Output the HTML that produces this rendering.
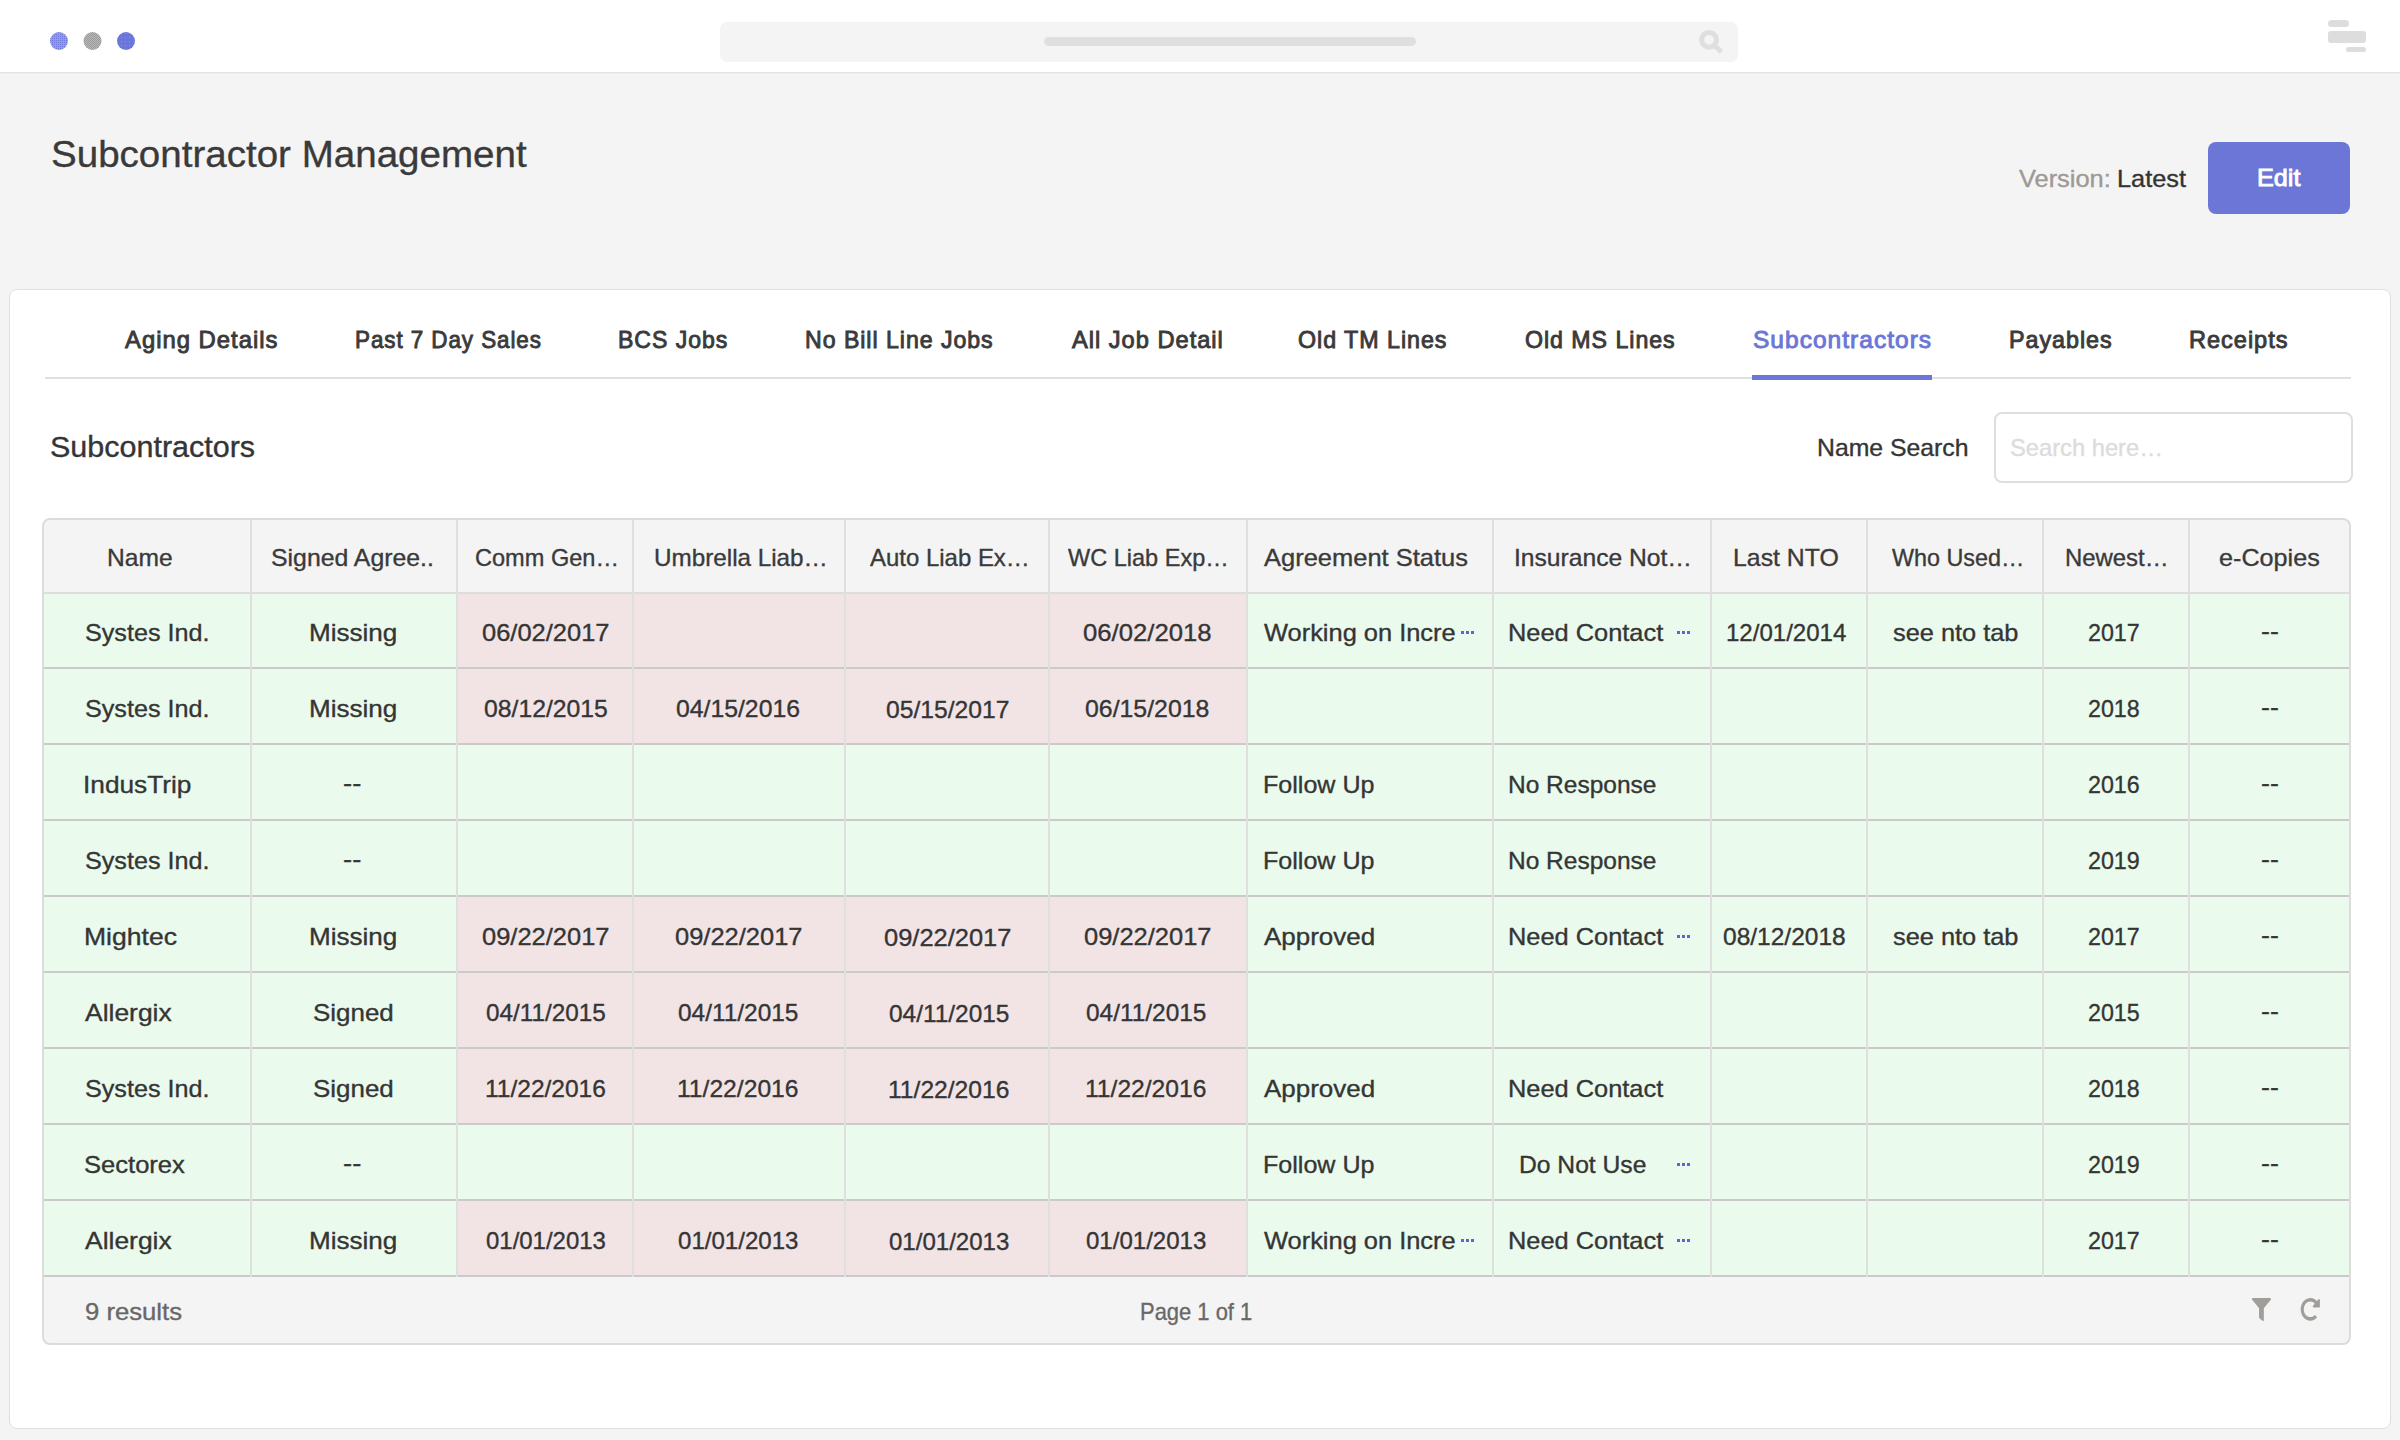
<!DOCTYPE html>
<html><head><meta charset="utf-8"><style>
html,body{margin:0;padding:0}
body{width:2400px;height:1440px;overflow:hidden;background:#f4f4f4;position:relative;font-family:"Liberation Sans",sans-serif}
.bx{position:absolute}
.t{position:absolute;white-space:pre;transform-origin:0 0;font-family:"Liberation Sans",sans-serif}
.dt{position:absolute;width:3px;height:3px;background:#5c65d8}
</style></head><body>
<div class=bx style="left:0;top:0;width:2400px;height:72px;background:#fff"></div>
<div class=bx style="left:0;top:72px;width:2400px;height:1px;background:#e2e4e4"></div>
<div class=bx style="left:0;top:73px;width:2400px;height:1px;background:#eceeee"></div>
<svg class=bx style="left:40px;top:22px" width="110" height="40" viewBox="40 22 110 40">
<defs>
<pattern id="p1" x="0" y="0" width="2" height="2" patternUnits="userSpaceOnUse"><rect width="2" height="2" fill="#a6a198"/><rect width="1" height="1" fill="#6e77d8"/></pattern>
<pattern id="p2" x="0" y="0" width="2" height="2" patternUnits="userSpaceOnUse"><rect width="2" height="2" fill="#b8b8b8"/><rect width="1" height="1" fill="#9a9a9a"/><rect x="1" y="1" width="1" height="1" fill="#9a9a9a"/></pattern>
<pattern id="p3" x="0" y="0" width="4" height="4" patternUnits="userSpaceOnUse"><rect width="4" height="4" fill="#6b76da"/><rect x="1" y="1" width="1" height="1" fill="#a29a86"/></pattern>
</defs>
<circle cx="59" cy="41" r="9" fill="url(#p1)"/>
<circle cx="92.5" cy="41" r="9" fill="url(#p2)"/>
<circle cx="126" cy="41" r="9" fill="url(#p3)"/>
</svg>


<div class=bx style="left:720px;top:22px;width:1018px;height:40px;border-radius:7px;background:#f4f4f4"></div>
<div class=bx style="left:1044px;top:37px;width:372px;height:9px;border-radius:5px;background:#dfdfdf"></div>
<svg class=bx style="left:1690px;top:24px" width="40" height="36" viewBox="1690 24 40 36">
 <circle cx="1709" cy="39.8" r="7.4" fill="none" stroke="#dfdfdf" stroke-width="5"/>
 <line x1="1714.5" y1="45.5" x2="1721.5" y2="52" stroke="#dfdfdf" stroke-width="5"/>
</svg>
<div class=bx style="left:2328px;top:20px;width:21px;height:7px;border-radius:3.5px;background:#dddddd"></div>
<div class=bx style="left:2328px;top:31px;width:38px;height:12px;border-radius:3px;background:#dddddd"></div>
<div class=bx style="left:2346px;top:47px;width:20px;height:5px;border-radius:2.5px;background:#dddddd"></div>
<div class=bx style="left:2208px;top:142px;width:142px;height:72px;border-radius:8px;background:#6b76d6"></div>
<div class=bx style="left:9px;top:289px;width:2380px;height:1138px;border:1px solid #dfdfdf;border-radius:8px;background:#fff"></div>
<div class=bx style="left:45px;top:377px;width:2306px;height:2px;background:#e0e0e0"></div>
<div class=bx style="left:1752px;top:375px;width:180px;height:5px;background:#6b76d6"></div>
<div class=bx style="left:1994px;top:412px;width:355px;height:67px;border:2px solid #dedede;border-radius:8px;background:#fff"></div>
<div class=bx style="left:42px;top:518px;width:2305px;height:823px;border:2px solid #dcdcdc;border-radius:8px;background:#f4f4f4"></div>
<div class=bx style="left:44px;top:594px;width:206px;height:73px;background:#eafbed"></div><div class=bx style="left:252px;top:594px;width:204px;height:73px;background:#eafbed"></div><div class=bx style="left:458px;top:594px;width:174px;height:73px;background:#f2e4e5"></div><div class=bx style="left:634px;top:594px;width:210px;height:73px;background:#f2e4e5"></div><div class=bx style="left:846px;top:594px;width:202px;height:73px;background:#f2e4e5"></div><div class=bx style="left:1050px;top:594px;width:196px;height:73px;background:#f2e4e5"></div><div class=bx style="left:1248px;top:594px;width:244px;height:73px;background:#eafbed"></div><div class=bx style="left:1494px;top:594px;width:216px;height:73px;background:#eafbed"></div><div class=bx style="left:1712px;top:594px;width:154px;height:73px;background:#eafbed"></div><div class=bx style="left:1868px;top:594px;width:174px;height:73px;background:#eafbed"></div><div class=bx style="left:2044px;top:594px;width:144px;height:73px;background:#eafbed"></div><div class=bx style="left:2190px;top:594px;width:159px;height:73px;background:#eafbed"></div><div class=bx style="left:44px;top:669px;width:206px;height:74px;background:#eafbed"></div><div class=bx style="left:252px;top:669px;width:204px;height:74px;background:#eafbed"></div><div class=bx style="left:458px;top:669px;width:174px;height:74px;background:#f2e4e5"></div><div class=bx style="left:634px;top:669px;width:210px;height:74px;background:#f2e4e5"></div><div class=bx style="left:846px;top:669px;width:202px;height:74px;background:#f2e4e5"></div><div class=bx style="left:1050px;top:669px;width:196px;height:74px;background:#f2e4e5"></div><div class=bx style="left:1248px;top:669px;width:244px;height:74px;background:#eafbed"></div><div class=bx style="left:1494px;top:669px;width:216px;height:74px;background:#eafbed"></div><div class=bx style="left:1712px;top:669px;width:154px;height:74px;background:#eafbed"></div><div class=bx style="left:1868px;top:669px;width:174px;height:74px;background:#eafbed"></div><div class=bx style="left:2044px;top:669px;width:144px;height:74px;background:#eafbed"></div><div class=bx style="left:2190px;top:669px;width:159px;height:74px;background:#eafbed"></div><div class=bx style="left:44px;top:745px;width:206px;height:74px;background:#eafbed"></div><div class=bx style="left:252px;top:745px;width:204px;height:74px;background:#eafbed"></div><div class=bx style="left:458px;top:745px;width:174px;height:74px;background:#eafbed"></div><div class=bx style="left:634px;top:745px;width:210px;height:74px;background:#eafbed"></div><div class=bx style="left:846px;top:745px;width:202px;height:74px;background:#eafbed"></div><div class=bx style="left:1050px;top:745px;width:196px;height:74px;background:#eafbed"></div><div class=bx style="left:1248px;top:745px;width:244px;height:74px;background:#eafbed"></div><div class=bx style="left:1494px;top:745px;width:216px;height:74px;background:#eafbed"></div><div class=bx style="left:1712px;top:745px;width:154px;height:74px;background:#eafbed"></div><div class=bx style="left:1868px;top:745px;width:174px;height:74px;background:#eafbed"></div><div class=bx style="left:2044px;top:745px;width:144px;height:74px;background:#eafbed"></div><div class=bx style="left:2190px;top:745px;width:159px;height:74px;background:#eafbed"></div><div class=bx style="left:44px;top:821px;width:206px;height:74px;background:#eafbed"></div><div class=bx style="left:252px;top:821px;width:204px;height:74px;background:#eafbed"></div><div class=bx style="left:458px;top:821px;width:174px;height:74px;background:#eafbed"></div><div class=bx style="left:634px;top:821px;width:210px;height:74px;background:#eafbed"></div><div class=bx style="left:846px;top:821px;width:202px;height:74px;background:#eafbed"></div><div class=bx style="left:1050px;top:821px;width:196px;height:74px;background:#eafbed"></div><div class=bx style="left:1248px;top:821px;width:244px;height:74px;background:#eafbed"></div><div class=bx style="left:1494px;top:821px;width:216px;height:74px;background:#eafbed"></div><div class=bx style="left:1712px;top:821px;width:154px;height:74px;background:#eafbed"></div><div class=bx style="left:1868px;top:821px;width:174px;height:74px;background:#eafbed"></div><div class=bx style="left:2044px;top:821px;width:144px;height:74px;background:#eafbed"></div><div class=bx style="left:2190px;top:821px;width:159px;height:74px;background:#eafbed"></div><div class=bx style="left:44px;top:897px;width:206px;height:74px;background:#eafbed"></div><div class=bx style="left:252px;top:897px;width:204px;height:74px;background:#eafbed"></div><div class=bx style="left:458px;top:897px;width:174px;height:74px;background:#f2e4e5"></div><div class=bx style="left:634px;top:897px;width:210px;height:74px;background:#f2e4e5"></div><div class=bx style="left:846px;top:897px;width:202px;height:74px;background:#f2e4e5"></div><div class=bx style="left:1050px;top:897px;width:196px;height:74px;background:#f2e4e5"></div><div class=bx style="left:1248px;top:897px;width:244px;height:74px;background:#eafbed"></div><div class=bx style="left:1494px;top:897px;width:216px;height:74px;background:#eafbed"></div><div class=bx style="left:1712px;top:897px;width:154px;height:74px;background:#eafbed"></div><div class=bx style="left:1868px;top:897px;width:174px;height:74px;background:#eafbed"></div><div class=bx style="left:2044px;top:897px;width:144px;height:74px;background:#eafbed"></div><div class=bx style="left:2190px;top:897px;width:159px;height:74px;background:#eafbed"></div><div class=bx style="left:44px;top:973px;width:206px;height:74px;background:#eafbed"></div><div class=bx style="left:252px;top:973px;width:204px;height:74px;background:#eafbed"></div><div class=bx style="left:458px;top:973px;width:174px;height:74px;background:#f2e4e5"></div><div class=bx style="left:634px;top:973px;width:210px;height:74px;background:#f2e4e5"></div><div class=bx style="left:846px;top:973px;width:202px;height:74px;background:#f2e4e5"></div><div class=bx style="left:1050px;top:973px;width:196px;height:74px;background:#f2e4e5"></div><div class=bx style="left:1248px;top:973px;width:244px;height:74px;background:#eafbed"></div><div class=bx style="left:1494px;top:973px;width:216px;height:74px;background:#eafbed"></div><div class=bx style="left:1712px;top:973px;width:154px;height:74px;background:#eafbed"></div><div class=bx style="left:1868px;top:973px;width:174px;height:74px;background:#eafbed"></div><div class=bx style="left:2044px;top:973px;width:144px;height:74px;background:#eafbed"></div><div class=bx style="left:2190px;top:973px;width:159px;height:74px;background:#eafbed"></div><div class=bx style="left:44px;top:1049px;width:206px;height:74px;background:#eafbed"></div><div class=bx style="left:252px;top:1049px;width:204px;height:74px;background:#eafbed"></div><div class=bx style="left:458px;top:1049px;width:174px;height:74px;background:#f2e4e5"></div><div class=bx style="left:634px;top:1049px;width:210px;height:74px;background:#f2e4e5"></div><div class=bx style="left:846px;top:1049px;width:202px;height:74px;background:#f2e4e5"></div><div class=bx style="left:1050px;top:1049px;width:196px;height:74px;background:#f2e4e5"></div><div class=bx style="left:1248px;top:1049px;width:244px;height:74px;background:#eafbed"></div><div class=bx style="left:1494px;top:1049px;width:216px;height:74px;background:#eafbed"></div><div class=bx style="left:1712px;top:1049px;width:154px;height:74px;background:#eafbed"></div><div class=bx style="left:1868px;top:1049px;width:174px;height:74px;background:#eafbed"></div><div class=bx style="left:2044px;top:1049px;width:144px;height:74px;background:#eafbed"></div><div class=bx style="left:2190px;top:1049px;width:159px;height:74px;background:#eafbed"></div><div class=bx style="left:44px;top:1125px;width:206px;height:74px;background:#eafbed"></div><div class=bx style="left:252px;top:1125px;width:204px;height:74px;background:#eafbed"></div><div class=bx style="left:458px;top:1125px;width:174px;height:74px;background:#eafbed"></div><div class=bx style="left:634px;top:1125px;width:210px;height:74px;background:#eafbed"></div><div class=bx style="left:846px;top:1125px;width:202px;height:74px;background:#eafbed"></div><div class=bx style="left:1050px;top:1125px;width:196px;height:74px;background:#eafbed"></div><div class=bx style="left:1248px;top:1125px;width:244px;height:74px;background:#eafbed"></div><div class=bx style="left:1494px;top:1125px;width:216px;height:74px;background:#eafbed"></div><div class=bx style="left:1712px;top:1125px;width:154px;height:74px;background:#eafbed"></div><div class=bx style="left:1868px;top:1125px;width:174px;height:74px;background:#eafbed"></div><div class=bx style="left:2044px;top:1125px;width:144px;height:74px;background:#eafbed"></div><div class=bx style="left:2190px;top:1125px;width:159px;height:74px;background:#eafbed"></div><div class=bx style="left:44px;top:1201px;width:206px;height:74px;background:#eafbed"></div><div class=bx style="left:252px;top:1201px;width:204px;height:74px;background:#eafbed"></div><div class=bx style="left:458px;top:1201px;width:174px;height:74px;background:#f2e4e5"></div><div class=bx style="left:634px;top:1201px;width:210px;height:74px;background:#f2e4e5"></div><div class=bx style="left:846px;top:1201px;width:202px;height:74px;background:#f2e4e5"></div><div class=bx style="left:1050px;top:1201px;width:196px;height:74px;background:#f2e4e5"></div><div class=bx style="left:1248px;top:1201px;width:244px;height:74px;background:#eafbed"></div><div class=bx style="left:1494px;top:1201px;width:216px;height:74px;background:#eafbed"></div><div class=bx style="left:1712px;top:1201px;width:154px;height:74px;background:#eafbed"></div><div class=bx style="left:1868px;top:1201px;width:174px;height:74px;background:#eafbed"></div><div class=bx style="left:2044px;top:1201px;width:144px;height:74px;background:#eafbed"></div><div class=bx style="left:2190px;top:1201px;width:159px;height:74px;background:#eafbed"></div>
<div class=bx style="left:44px;top:592px;width:2305px;height:2px;background:#dcdddc"></div><div class=bx style="left:44px;top:667px;width:2305px;height:2px;background:#cacaca"></div><div class=bx style="left:44px;top:743px;width:2305px;height:2px;background:#cacaca"></div><div class=bx style="left:44px;top:819px;width:2305px;height:2px;background:#cacaca"></div><div class=bx style="left:44px;top:895px;width:2305px;height:2px;background:#cacaca"></div><div class=bx style="left:44px;top:971px;width:2305px;height:2px;background:#cacaca"></div><div class=bx style="left:44px;top:1047px;width:2305px;height:2px;background:#cacaca"></div><div class=bx style="left:44px;top:1123px;width:2305px;height:2px;background:#cacaca"></div><div class=bx style="left:44px;top:1199px;width:2305px;height:2px;background:#cacaca"></div><div class=bx style="left:44px;top:1275px;width:2305px;height:2px;background:#cacaca"></div><div class=bx style="left:250px;top:520px;width:2px;height:757px;background:#dedfde"></div><div class=bx style="left:456px;top:520px;width:2px;height:757px;background:#dedfde"></div><div class=bx style="left:632px;top:520px;width:2px;height:757px;background:#dedfde"></div><div class=bx style="left:844px;top:520px;width:2px;height:757px;background:#dedfde"></div><div class=bx style="left:1048px;top:520px;width:2px;height:757px;background:#dedfde"></div><div class=bx style="left:1246px;top:520px;width:2px;height:757px;background:#dedfde"></div><div class=bx style="left:1492px;top:520px;width:2px;height:757px;background:#dedfde"></div><div class=bx style="left:1710px;top:520px;width:2px;height:757px;background:#dedfde"></div><div class=bx style="left:1866px;top:520px;width:2px;height:757px;background:#dedfde"></div><div class=bx style="left:2042px;top:520px;width:2px;height:757px;background:#dedfde"></div><div class=bx style="left:2188px;top:520px;width:2px;height:757px;background:#dedfde"></div>
<svg class=bx style="left:0;top:0" width="2400" height="1440" viewBox="0 0 2400 1440">
 <path transform="translate(2251.9 1298) scale(0.03730 0.04492)" d="M487.976 0H24.028C2.71 0-8.047 25.866 7.058 40.971L192 225.941V432c0 7.831 3.821 15.17 10.237 19.662l80 55.98C298.02 518.69 320 507.493 320 487.98V225.941l184.947-184.97C520.021 25.896 509.338 0 487.976 0z" fill="#a19d99"/>
 <path transform="translate(2300.390 1297.531) scale(0.03871 0.04617)" d="M256.455 8c66.269.119 126.437 26.233 170.859 68.685l35.715-35.715C478.149 25.851 504 36.559 504 57.941V192c0 13.255-10.745 24-24 24H345.941c-21.382 0-32.09-25.851-16.971-40.971l41.75-41.75c-30.864-28.899-70.801-44.907-113.23-45.273-92.398-.798-170.283 73.977-169.484 169.442C88.764 348.009 162.184 424 256 424c41.127 0 79.997-14.678 110.629-41.556 4.743-4.161 11.906-3.908 16.368.553l39.662 39.662c4.872 4.872 4.631 12.815-.482 17.433C378.202 479.813 319.926 504 256 504 119.034 504 8.001 392.967 8 256.002 7.999 119.193 119.646 7.755 256.455 8z" fill="#a19d99"/>
</svg>
<i class=dt style="left:1461px;top:631px"></i><i class=dt style="left:1466px;top:631px"></i><i class=dt style="left:1471px;top:631px"></i><i class=dt style="left:1677px;top:631px"></i><i class=dt style="left:1682px;top:631px"></i><i class=dt style="left:1687px;top:631px"></i><i class=dt style="left:1677px;top:935px"></i><i class=dt style="left:1682px;top:935px"></i><i class=dt style="left:1687px;top:935px"></i><i class=dt style="left:1677px;top:1163px"></i><i class=dt style="left:1682px;top:1163px"></i><i class=dt style="left:1687px;top:1163px"></i><i class=dt style="left:1461px;top:1239px"></i><i class=dt style="left:1466px;top:1239px"></i><i class=dt style="left:1471px;top:1239px"></i><i class=dt style="left:1677px;top:1239px"></i><i class=dt style="left:1682px;top:1239px"></i><i class=dt style="left:1687px;top:1239px"></i>
<span class=t style="left:50.67px;top:136.26px;font-size:37.5px;line-height:37.5px;font-weight:400;color:#3a3a3a;transform:scaleX(1.0278);letter-spacing:0px;-webkit-text-stroke:0.35px #3a3a3a">Subcontractor Management</span><span class=t style="left:2018.70px;top:167.38px;font-size:24px;line-height:24px;font-weight:400;color:#9d9994;transform:scaleX(1.0582);letter-spacing:0px;-webkit-text-stroke:0.35px #9d9994">Version:</span><span class=t style="left:2116.64px;top:167.38px;font-size:24px;line-height:24px;font-weight:400;color:#333333;transform:scaleX(1.0555);letter-spacing:0px;-webkit-text-stroke:0.35px #333333">Latest</span><span class=t style="left:2256.95px;top:165.88px;font-size:24px;line-height:24px;font-weight:400;color:#ffffff;transform:scaleX(1.0495);letter-spacing:0px;-webkit-text-stroke:0.9px #ffffff">Edit</span><span class=t style="left:124.90px;top:327.68px;font-size:24px;line-height:24px;font-weight:400;color:#3a3a3a;transform:scaleX(0.9934);letter-spacing:1.0px;-webkit-text-stroke:0.9px #3a3a3a">Aging Details</span><span class=t style="left:354.97px;top:327.68px;font-size:24px;line-height:24px;font-weight:400;color:#3a3a3a;transform:scaleX(0.9339);letter-spacing:1.0px;-webkit-text-stroke:0.9px #3a3a3a">Past 7 Day Sales</span><span class=t style="left:618.34px;top:327.68px;font-size:24px;line-height:24px;font-weight:400;color:#3a3a3a;transform:scaleX(0.9609);letter-spacing:1.0px;-webkit-text-stroke:0.9px #3a3a3a">BCS Jobs</span><span class=t style="left:805.14px;top:327.68px;font-size:24px;line-height:24px;font-weight:400;color:#3a3a3a;transform:scaleX(0.9636);letter-spacing:1.0px;-webkit-text-stroke:0.9px #3a3a3a">No Bill Line Jobs</span><span class=t style="left:1071.60px;top:327.68px;font-size:24px;line-height:24px;font-weight:400;color:#3a3a3a;transform:scaleX(0.9853);letter-spacing:1.0px;-webkit-text-stroke:0.9px #3a3a3a">All Job Detail</span><span class=t style="left:1298.33px;top:327.68px;font-size:24px;line-height:24px;font-weight:400;color:#3a3a3a;transform:scaleX(0.9685);letter-spacing:1.0px;-webkit-text-stroke:0.9px #3a3a3a">Old TM Lines</span><span class=t style="left:1525.03px;top:327.68px;font-size:24px;line-height:24px;font-weight:400;color:#3a3a3a;transform:scaleX(0.9652);letter-spacing:1.0px;-webkit-text-stroke:0.9px #3a3a3a">Old MS Lines</span><span class=t style="left:1752.78px;top:327.68px;font-size:24px;line-height:24px;font-weight:400;color:#6b76d6;transform:scaleX(1.0213);letter-spacing:1.0px;-webkit-text-stroke:0.9px #6b76d6">Subcontractors</span><span class=t style="left:2008.63px;top:327.68px;font-size:24px;line-height:24px;font-weight:400;color:#3a3a3a;transform:scaleX(0.9711);letter-spacing:1.0px;-webkit-text-stroke:0.9px #3a3a3a">Payables</span><span class=t style="left:2188.62px;top:327.68px;font-size:24px;line-height:24px;font-weight:400;color:#3a3a3a;transform:scaleX(0.9811);letter-spacing:1.0px;-webkit-text-stroke:0.9px #3a3a3a">Receipts</span><span class=t style="left:49.95px;top:433.45px;font-size:29px;line-height:29px;font-weight:400;color:#353535;transform:scaleX(1.0515);letter-spacing:0px;-webkit-text-stroke:0.35px #353535">Subcontractors</span><span class=t style="left:1817.47px;top:436.18px;font-size:24px;line-height:24px;font-weight:400;color:#353535;transform:scaleX(1.0320);letter-spacing:0px;-webkit-text-stroke:0.35px #353535">Name Search</span><span class=t style="left:2010.01px;top:436.18px;font-size:24px;line-height:24px;font-weight:400;color:#dcdcdc;transform:scaleX(0.9878);letter-spacing:0px;-webkit-text-stroke:0.35px #dcdcdc">Search here…</span><span class=t style="left:107.28px;top:545.68px;font-size:24px;line-height:24px;font-weight:400;color:#3a3a3a;transform:scaleX(1.0244);letter-spacing:0px;-webkit-text-stroke:0.35px #3a3a3a">Name</span><span class=t style="left:271.47px;top:545.68px;font-size:24px;line-height:24px;font-weight:400;color:#3a3a3a;transform:scaleX(1.0345);letter-spacing:0px;-webkit-text-stroke:0.35px #3a3a3a">Signed Agree..</span><span class=t style="left:474.92px;top:545.68px;font-size:24px;line-height:24px;font-weight:400;color:#3a3a3a;transform:scaleX(0.9818);letter-spacing:0px;-webkit-text-stroke:0.35px #3a3a3a">Comm Gen…</span><span class=t style="left:653.59px;top:545.68px;font-size:24px;line-height:24px;font-weight:400;color:#3a3a3a;transform:scaleX(1.0103);letter-spacing:0px;-webkit-text-stroke:0.35px #3a3a3a">Umbrella Liab…</span><span class=t style="left:869.80px;top:545.68px;font-size:24px;line-height:24px;font-weight:400;color:#3a3a3a;transform:scaleX(0.9982);letter-spacing:0px;-webkit-text-stroke:0.35px #3a3a3a">Auto Liab Ex…</span><span class=t style="left:1068.00px;top:545.68px;font-size:24px;line-height:24px;font-weight:400;color:#3a3a3a;transform:scaleX(0.9798);letter-spacing:0px;-webkit-text-stroke:0.35px #3a3a3a">WC Liab Exp…</span><span class=t style="left:1264.00px;top:545.68px;font-size:24px;line-height:24px;font-weight:400;color:#3a3a3a;transform:scaleX(1.0619);letter-spacing:0px;-webkit-text-stroke:0.35px #3a3a3a">Agreement Status</span><span class=t style="left:1513.95px;top:545.68px;font-size:24px;line-height:24px;font-weight:400;color:#3a3a3a;transform:scaleX(1.0260);letter-spacing:0px;-webkit-text-stroke:0.35px #3a3a3a">Insurance Not…</span><span class=t style="left:1732.97px;top:545.68px;font-size:24px;line-height:24px;font-weight:400;color:#3a3a3a;transform:scaleX(1.0349);letter-spacing:0px;-webkit-text-stroke:0.35px #3a3a3a">Last NTO</span><span class=t style="left:1892.00px;top:545.68px;font-size:24px;line-height:24px;font-weight:400;color:#3a3a3a;transform:scaleX(0.9726);letter-spacing:0px;-webkit-text-stroke:0.35px #3a3a3a">Who Used…</span><span class=t style="left:2064.90px;top:545.68px;font-size:24px;line-height:24px;font-weight:400;color:#3a3a3a;transform:scaleX(0.9957);letter-spacing:0px;-webkit-text-stroke:0.35px #3a3a3a">Newest…</span><span class=t style="left:2218.65px;top:545.68px;font-size:24px;line-height:24px;font-weight:400;color:#3a3a3a;transform:scaleX(1.0490);letter-spacing:0px;-webkit-text-stroke:0.35px #3a3a3a">e-Copies</span><span class=t style="left:84.75px;top:620.68px;font-size:24px;line-height:24px;font-weight:400;color:#353535;transform:scaleX(1.0486);letter-spacing:0px;-webkit-text-stroke:0.35px #353535">Systes Ind.</span><span class=t style="left:308.91px;top:620.68px;font-size:24px;line-height:24px;font-weight:400;color:#353535;transform:scaleX(1.0860);letter-spacing:0px;-webkit-text-stroke:0.35px #353535">Missing</span><span class=t style="left:481.70px;top:620.68px;font-size:24px;line-height:24px;font-weight:400;color:#353535;transform:scaleX(1.0612);letter-spacing:0px;-webkit-text-stroke:0.35px #353535">06/02/2017</span><span class=t style="left:1082.80px;top:620.68px;font-size:24px;line-height:24px;font-weight:400;color:#353535;transform:scaleX(1.0704);letter-spacing:0px;-webkit-text-stroke:0.35px #353535">06/02/2018</span><span class=t style="left:1264.30px;top:620.68px;font-size:24px;line-height:24px;font-weight:400;color:#353535;transform:scaleX(1.0591);letter-spacing:0px;-webkit-text-stroke:0.35px #353535">Working on Incre</span><span class=t style="left:1508.14px;top:620.68px;font-size:24px;line-height:24px;font-weight:400;color:#353535;transform:scaleX(1.0576);letter-spacing:0px;-webkit-text-stroke:0.35px #353535">Need Contact</span><span class=t style="left:1725.70px;top:620.68px;font-size:24px;line-height:24px;font-weight:400;color:#353535;transform:scaleX(1.0019);letter-spacing:0px;-webkit-text-stroke:0.35px #353535">12/01/2014</span><span class=t style="left:1893.30px;top:620.68px;font-size:24px;line-height:24px;font-weight:400;color:#353535;transform:scaleX(1.0565);letter-spacing:0px;-webkit-text-stroke:0.35px #353535">see nto tab</span><span class=t style="left:2088.33px;top:620.68px;font-size:24px;line-height:24px;font-weight:400;color:#353535;transform:scaleX(0.9684);letter-spacing:0px;-webkit-text-stroke:0.35px #353535">2017</span><span class=t style="left:2260.89px;top:618.68px;font-size:24px;line-height:24px;font-weight:400;color:#353535;transform:scaleX(1.1149);letter-spacing:0px;-webkit-text-stroke:0.35px #353535">--</span><span class=t style="left:84.75px;top:696.68px;font-size:24px;line-height:24px;font-weight:400;color:#353535;transform:scaleX(1.0486);letter-spacing:0px;-webkit-text-stroke:0.35px #353535">Systes Ind.</span><span class=t style="left:308.91px;top:696.68px;font-size:24px;line-height:24px;font-weight:400;color:#353535;transform:scaleX(1.0860);letter-spacing:0px;-webkit-text-stroke:0.35px #353535">Missing</span><span class=t style="left:483.80px;top:696.68px;font-size:24px;line-height:24px;font-weight:400;color:#353535;transform:scaleX(1.0311);letter-spacing:0px;-webkit-text-stroke:0.35px #353535">08/12/2015</span><span class=t style="left:676.40px;top:696.68px;font-size:24px;line-height:24px;font-weight:400;color:#353535;transform:scaleX(1.0320);letter-spacing:0px;-webkit-text-stroke:0.35px #353535">04/15/2016</span><span class=t style="left:886.20px;top:697.68px;font-size:24px;line-height:24px;font-weight:400;color:#353535;transform:scaleX(1.0270);letter-spacing:0px;-webkit-text-stroke:0.35px #353535">05/15/2017</span><span class=t style="left:1084.90px;top:696.68px;font-size:24px;line-height:24px;font-weight:400;color:#353535;transform:scaleX(1.0353);letter-spacing:0px;-webkit-text-stroke:0.35px #353535">06/15/2018</span><span class=t style="left:2088.33px;top:696.68px;font-size:24px;line-height:24px;font-weight:400;color:#353535;transform:scaleX(0.9684);letter-spacing:0px;-webkit-text-stroke:0.35px #353535">2018</span><span class=t style="left:2260.89px;top:694.68px;font-size:24px;line-height:24px;font-weight:400;color:#353535;transform:scaleX(1.1149);letter-spacing:0px;-webkit-text-stroke:0.35px #353535">--</span><span class=t style="left:83.21px;top:772.68px;font-size:24px;line-height:24px;font-weight:400;color:#353535;transform:scaleX(1.0940);letter-spacing:0px;-webkit-text-stroke:0.35px #353535">IndusTrip</span><span class=t style="left:342.86px;top:770.68px;font-size:24px;line-height:24px;font-weight:400;color:#353535;transform:scaleX(1.1435);letter-spacing:0px;-webkit-text-stroke:0.35px #353535">--</span><span class=t style="left:1263.25px;top:772.68px;font-size:24px;line-height:24px;font-weight:400;color:#353535;transform:scaleX(1.0451);letter-spacing:0px;-webkit-text-stroke:0.35px #353535">Follow Up</span><span class=t style="left:1508.18px;top:772.68px;font-size:24px;line-height:24px;font-weight:400;color:#353535;transform:scaleX(1.0203);letter-spacing:0px;-webkit-text-stroke:0.35px #353535">No Response</span><span class=t style="left:2088.33px;top:772.68px;font-size:24px;line-height:24px;font-weight:400;color:#353535;transform:scaleX(0.9684);letter-spacing:0px;-webkit-text-stroke:0.35px #353535">2016</span><span class=t style="left:2260.89px;top:770.68px;font-size:24px;line-height:24px;font-weight:400;color:#353535;transform:scaleX(1.1149);letter-spacing:0px;-webkit-text-stroke:0.35px #353535">--</span><span class=t style="left:84.75px;top:848.68px;font-size:24px;line-height:24px;font-weight:400;color:#353535;transform:scaleX(1.0486);letter-spacing:0px;-webkit-text-stroke:0.35px #353535">Systes Ind.</span><span class=t style="left:342.86px;top:846.68px;font-size:24px;line-height:24px;font-weight:400;color:#353535;transform:scaleX(1.1435);letter-spacing:0px;-webkit-text-stroke:0.35px #353535">--</span><span class=t style="left:1263.25px;top:848.68px;font-size:24px;line-height:24px;font-weight:400;color:#353535;transform:scaleX(1.0451);letter-spacing:0px;-webkit-text-stroke:0.35px #353535">Follow Up</span><span class=t style="left:1508.18px;top:848.68px;font-size:24px;line-height:24px;font-weight:400;color:#353535;transform:scaleX(1.0203);letter-spacing:0px;-webkit-text-stroke:0.35px #353535">No Response</span><span class=t style="left:2088.33px;top:848.68px;font-size:24px;line-height:24px;font-weight:400;color:#353535;transform:scaleX(0.9684);letter-spacing:0px;-webkit-text-stroke:0.35px #353535">2019</span><span class=t style="left:2260.89px;top:846.68px;font-size:24px;line-height:24px;font-weight:400;color:#353535;transform:scaleX(1.1149);letter-spacing:0px;-webkit-text-stroke:0.35px #353535">--</span><span class=t style="left:84.29px;top:924.68px;font-size:24px;line-height:24px;font-weight:400;color:#353535;transform:scaleX(1.1056);letter-spacing:0px;-webkit-text-stroke:0.35px #353535">Mightec</span><span class=t style="left:308.91px;top:924.68px;font-size:24px;line-height:24px;font-weight:400;color:#353535;transform:scaleX(1.0860);letter-spacing:0px;-webkit-text-stroke:0.35px #353535">Missing</span><span class=t style="left:481.70px;top:924.68px;font-size:24px;line-height:24px;font-weight:400;color:#353535;transform:scaleX(1.0612);letter-spacing:0px;-webkit-text-stroke:0.35px #353535">09/22/2017</span><span class=t style="left:675.40px;top:924.68px;font-size:24px;line-height:24px;font-weight:400;color:#353535;transform:scaleX(1.0612);letter-spacing:0px;-webkit-text-stroke:0.35px #353535">09/22/2017</span><span class=t style="left:883.70px;top:925.68px;font-size:24px;line-height:24px;font-weight:400;color:#353535;transform:scaleX(1.0604);letter-spacing:0px;-webkit-text-stroke:0.35px #353535">09/22/2017</span><span class=t style="left:1083.90px;top:924.68px;font-size:24px;line-height:24px;font-weight:400;color:#353535;transform:scaleX(1.0612);letter-spacing:0px;-webkit-text-stroke:0.35px #353535">09/22/2017</span><span class=t style="left:1264.30px;top:924.68px;font-size:24px;line-height:24px;font-weight:400;color:#353535;transform:scaleX(1.0820);letter-spacing:0px;-webkit-text-stroke:0.35px #353535">Approved</span><span class=t style="left:1508.14px;top:924.68px;font-size:24px;line-height:24px;font-weight:400;color:#353535;transform:scaleX(1.0576);letter-spacing:0px;-webkit-text-stroke:0.35px #353535">Need Contact</span><span class=t style="left:1723.40px;top:924.68px;font-size:24px;line-height:24px;font-weight:400;color:#353535;transform:scaleX(1.0211);letter-spacing:0px;-webkit-text-stroke:0.35px #353535">08/12/2018</span><span class=t style="left:1893.30px;top:924.68px;font-size:24px;line-height:24px;font-weight:400;color:#353535;transform:scaleX(1.0565);letter-spacing:0px;-webkit-text-stroke:0.35px #353535">see nto tab</span><span class=t style="left:2088.33px;top:924.68px;font-size:24px;line-height:24px;font-weight:400;color:#353535;transform:scaleX(0.9684);letter-spacing:0px;-webkit-text-stroke:0.35px #353535">2017</span><span class=t style="left:2260.89px;top:922.68px;font-size:24px;line-height:24px;font-weight:400;color:#353535;transform:scaleX(1.1149);letter-spacing:0px;-webkit-text-stroke:0.35px #353535">--</span><span class=t style="left:85.40px;top:1000.68px;font-size:24px;line-height:24px;font-weight:400;color:#353535;transform:scaleX(1.1018);letter-spacing:0px;-webkit-text-stroke:0.35px #353535">Allergix</span><span class=t style="left:312.72px;top:1000.68px;font-size:24px;line-height:24px;font-weight:400;color:#353535;transform:scaleX(1.0804);letter-spacing:0px;-webkit-text-stroke:0.35px #353535">Signed</span><span class=t style="left:486.30px;top:1000.68px;font-size:24px;line-height:24px;font-weight:400;color:#353535;transform:scaleX(1.0128);letter-spacing:0px;-webkit-text-stroke:0.35px #353535">04/11/2015</span><span class=t style="left:677.90px;top:1000.68px;font-size:24px;line-height:24px;font-weight:400;color:#353535;transform:scaleX(1.0171);letter-spacing:0px;-webkit-text-stroke:0.35px #353535">04/11/2015</span><span class=t style="left:888.70px;top:1001.68px;font-size:24px;line-height:24px;font-weight:400;color:#353535;transform:scaleX(1.0171);letter-spacing:0px;-webkit-text-stroke:0.35px #353535">04/11/2015</span><span class=t style="left:1086.40px;top:1000.68px;font-size:24px;line-height:24px;font-weight:400;color:#353535;transform:scaleX(1.0171);letter-spacing:0px;-webkit-text-stroke:0.35px #353535">04/11/2015</span><span class=t style="left:2088.33px;top:1000.68px;font-size:24px;line-height:24px;font-weight:400;color:#353535;transform:scaleX(0.9684);letter-spacing:0px;-webkit-text-stroke:0.35px #353535">2015</span><span class=t style="left:2260.89px;top:998.68px;font-size:24px;line-height:24px;font-weight:400;color:#353535;transform:scaleX(1.1149);letter-spacing:0px;-webkit-text-stroke:0.35px #353535">--</span><span class=t style="left:84.75px;top:1076.68px;font-size:24px;line-height:24px;font-weight:400;color:#353535;transform:scaleX(1.0486);letter-spacing:0px;-webkit-text-stroke:0.35px #353535">Systes Ind.</span><span class=t style="left:312.72px;top:1076.68px;font-size:24px;line-height:24px;font-weight:400;color:#353535;transform:scaleX(1.0804);letter-spacing:0px;-webkit-text-stroke:0.35px #353535">Signed</span><span class=t style="left:485.28px;top:1076.68px;font-size:24px;line-height:24px;font-weight:400;color:#353535;transform:scaleX(1.0215);letter-spacing:0px;-webkit-text-stroke:0.35px #353535">11/22/2016</span><span class=t style="left:676.87px;top:1076.68px;font-size:24px;line-height:24px;font-weight:400;color:#353535;transform:scaleX(1.0266);letter-spacing:0px;-webkit-text-stroke:0.35px #353535">11/22/2016</span><span class=t style="left:887.67px;top:1077.68px;font-size:24px;line-height:24px;font-weight:400;color:#353535;transform:scaleX(1.0257);letter-spacing:0px;-webkit-text-stroke:0.35px #353535">11/22/2016</span><span class=t style="left:1085.37px;top:1076.68px;font-size:24px;line-height:24px;font-weight:400;color:#353535;transform:scaleX(1.0257);letter-spacing:0px;-webkit-text-stroke:0.35px #353535">11/22/2016</span><span class=t style="left:1264.30px;top:1076.68px;font-size:24px;line-height:24px;font-weight:400;color:#353535;transform:scaleX(1.0820);letter-spacing:0px;-webkit-text-stroke:0.35px #353535">Approved</span><span class=t style="left:1508.14px;top:1076.68px;font-size:24px;line-height:24px;font-weight:400;color:#353535;transform:scaleX(1.0576);letter-spacing:0px;-webkit-text-stroke:0.35px #353535">Need Contact</span><span class=t style="left:2088.33px;top:1076.68px;font-size:24px;line-height:24px;font-weight:400;color:#353535;transform:scaleX(0.9684);letter-spacing:0px;-webkit-text-stroke:0.35px #353535">2018</span><span class=t style="left:2260.89px;top:1074.68px;font-size:24px;line-height:24px;font-weight:400;color:#353535;transform:scaleX(1.1149);letter-spacing:0px;-webkit-text-stroke:0.35px #353535">--</span><span class=t style="left:84.34px;top:1152.68px;font-size:24px;line-height:24px;font-weight:400;color:#353535;transform:scaleX(1.0650);letter-spacing:0px;-webkit-text-stroke:0.35px #353535">Sectorex</span><span class=t style="left:342.86px;top:1150.68px;font-size:24px;line-height:24px;font-weight:400;color:#353535;transform:scaleX(1.1435);letter-spacing:0px;-webkit-text-stroke:0.35px #353535">--</span><span class=t style="left:1263.25px;top:1152.68px;font-size:24px;line-height:24px;font-weight:400;color:#353535;transform:scaleX(1.0451);letter-spacing:0px;-webkit-text-stroke:0.35px #353535">Follow Up</span><span class=t style="left:1518.97px;top:1152.68px;font-size:24px;line-height:24px;font-weight:400;color:#353535;transform:scaleX(1.0269);letter-spacing:0px;-webkit-text-stroke:0.35px #353535">Do Not Use</span><span class=t style="left:2088.33px;top:1152.68px;font-size:24px;line-height:24px;font-weight:400;color:#353535;transform:scaleX(0.9684);letter-spacing:0px;-webkit-text-stroke:0.35px #353535">2019</span><span class=t style="left:2260.89px;top:1150.68px;font-size:24px;line-height:24px;font-weight:400;color:#353535;transform:scaleX(1.1149);letter-spacing:0px;-webkit-text-stroke:0.35px #353535">--</span><span class=t style="left:85.40px;top:1228.68px;font-size:24px;line-height:24px;font-weight:400;color:#353535;transform:scaleX(1.1018);letter-spacing:0px;-webkit-text-stroke:0.35px #353535">Allergix</span><span class=t style="left:308.91px;top:1228.68px;font-size:24px;line-height:24px;font-weight:400;color:#353535;transform:scaleX(1.0860);letter-spacing:0px;-webkit-text-stroke:0.35px #353535">Missing</span><span class=t style="left:486.30px;top:1228.68px;font-size:24px;line-height:24px;font-weight:400;color:#353535;transform:scaleX(0.9977);letter-spacing:0px;-webkit-text-stroke:0.35px #353535">01/01/2013</span><span class=t style="left:677.90px;top:1228.68px;font-size:24px;line-height:24px;font-weight:400;color:#353535;transform:scaleX(1.0028);letter-spacing:0px;-webkit-text-stroke:0.35px #353535">01/01/2013</span><span class=t style="left:888.70px;top:1229.68px;font-size:24px;line-height:24px;font-weight:400;color:#353535;transform:scaleX(1.0019);letter-spacing:0px;-webkit-text-stroke:0.35px #353535">01/01/2013</span><span class=t style="left:1086.40px;top:1228.68px;font-size:24px;line-height:24px;font-weight:400;color:#353535;transform:scaleX(1.0019);letter-spacing:0px;-webkit-text-stroke:0.35px #353535">01/01/2013</span><span class=t style="left:1264.30px;top:1228.68px;font-size:24px;line-height:24px;font-weight:400;color:#353535;transform:scaleX(1.0591);letter-spacing:0px;-webkit-text-stroke:0.35px #353535">Working on Incre</span><span class=t style="left:1508.14px;top:1228.68px;font-size:24px;line-height:24px;font-weight:400;color:#353535;transform:scaleX(1.0576);letter-spacing:0px;-webkit-text-stroke:0.35px #353535">Need Contact</span><span class=t style="left:2088.33px;top:1228.68px;font-size:24px;line-height:24px;font-weight:400;color:#353535;transform:scaleX(0.9684);letter-spacing:0px;-webkit-text-stroke:0.35px #353535">2017</span><span class=t style="left:2260.89px;top:1226.68px;font-size:24px;line-height:24px;font-weight:400;color:#353535;transform:scaleX(1.1149);letter-spacing:0px;-webkit-text-stroke:0.35px #353535">--</span><span class=t style="left:84.73px;top:1299.68px;font-size:24px;line-height:24px;font-weight:400;color:#686868;transform:scaleX(1.0691);letter-spacing:0px;-webkit-text-stroke:0.35px #686868">9 results</span><span class=t style="left:1140.09px;top:1299.68px;font-size:24px;line-height:24px;font-weight:400;color:#686868;transform:scaleX(0.9142);letter-spacing:0px;-webkit-text-stroke:0.35px #686868">Page 1 of 1</span>
</body></html>
